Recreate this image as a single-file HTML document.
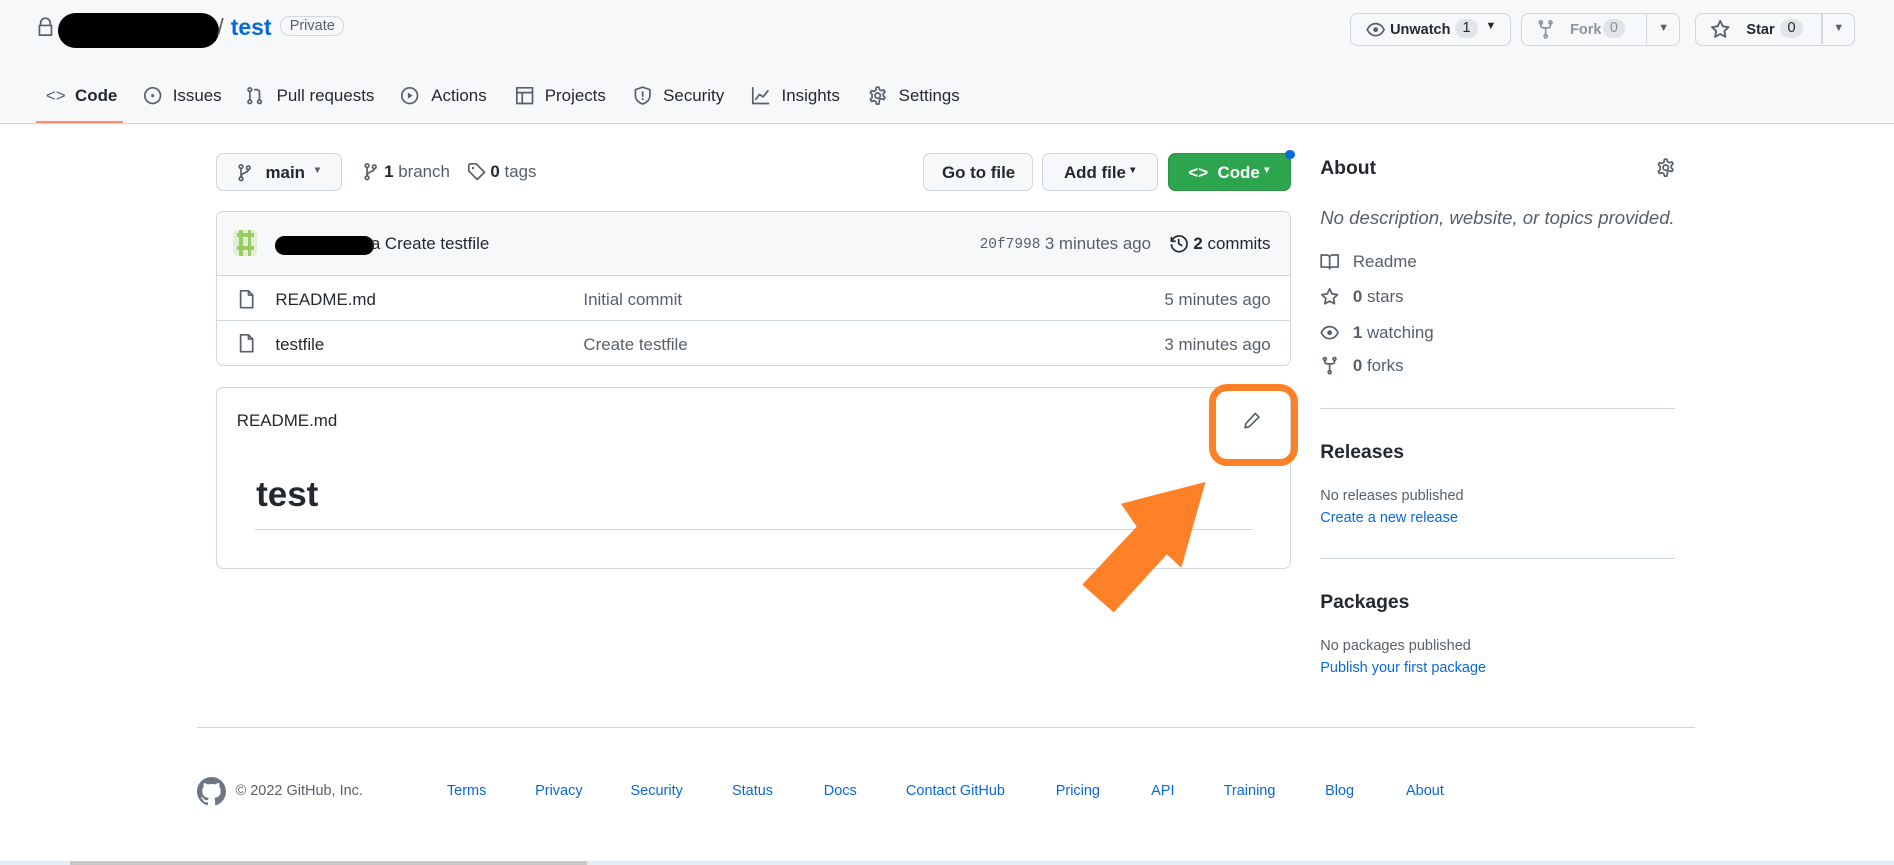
<!DOCTYPE html>
<html><head><meta charset="utf-8"><style>
html,body{margin:0;padding:0;width:1894px;height:865px;overflow:hidden;background:#fff}
#w{zoom:1.20791;width:1568px;height:716px;position:relative;font-family:"Liberation Sans",sans-serif;color:#24292f;font-size:14px}
.a{position:absolute;white-space:nowrap}
.hdr{position:absolute;left:0;top:0;width:1568px;height:102px;background:#f6f8fa;border-bottom:1px solid #d0d7de}
.btn{position:absolute;border:1px solid #d0d7de;border-radius:6px;background:#f6f8fa;box-sizing:border-box;font-size:12px;font-weight:bold}
.cnt{display:inline-block;background:#e1e4e8;border-radius:10px;padding:1px 6px;font-weight:normal;font-size:12px}
.nav{position:absolute;top:71px;font-size:14px}
svg{vertical-align:middle}
.ic{fill:none;stroke:#57606a;stroke-width:1.4;stroke-linecap:round;stroke-linejoin:round}
.blue{color:#0969da}
.gray{color:#57606a}
.box{position:absolute;border:1px solid #d0d7de;border-radius:6px;box-sizing:border-box}
.line{position:absolute;height:1px;background:#d0d7de}
.fl{position:absolute;top:648px;font-size:12px;color:#0969da}
</style></head><body><div id="w">
<div class="hdr"></div>
<svg class="a" style="left:31px;top:14px" width="14" height="16" viewBox="0 0 14 16"><path class="ic" d="M3 7V5a4 4 0 0 1 8 0v2M2 7h10v8H2z"/></svg>
<div class="a" style="left:48px;top:11px;width:133px;height:29px;background:#000;border-radius:15px"></div>
<div class="a" style="left:180px;top:12px;font-size:19px;color:#57606a">/</div>
<div class="a blue" style="left:191px;top:12px;font-size:19px;font-weight:bold">test</div>
<div class="a" style="left:232px;top:13px;border:1px solid #d0d7de;border-radius:12px;padding:1px 7px;font-size:12px;color:#57606a">Private</div>

<div class="btn" style="left:1118px;top:11px;width:133px;height:27px"><svg class="a" style="left:12px;top:5px" width="16" height="16" viewBox="0 0 16 16"><path class="ic" d="M1 8c2-4 4.5-5 7-5s5 1 7 5c-2 4-4.5 5-7 5S3 12 1 8z"/><circle cx="8" cy="8" r="2" fill="#57606a"/></svg><span class="a" style="left:32px;top:6px">Unwatch</span><span class="cnt a" style="left:86px;top:4px">1</span><span class="a" style="left:111px;top:5px;font-size:9px">▼</span></div>
<div class="btn" style="left:1259px;top:11px;width:132px;height:27px;color:#8c959f"><svg class="a" style="left:12px;top:5px" width="16" height="16" viewBox="0 0 16 16"><path class="ic" style="stroke:#8c959f" d="M4 2.5v2c0 1.5 1 2 2 2h4c1 0 2-.5 2-2v-2M8 6.5v6"/><circle class="ic" style="stroke:#8c959f" cx="4" cy="2" r="1.3"/><circle class="ic" style="stroke:#8c959f" cx="12" cy="2" r="1.3"/><circle class="ic" style="stroke:#8c959f" cx="8" cy="13.5" r="1.3"/></svg><span class="a" style="left:40px;top:6px">Fork</span><span class="cnt a" style="left:67px;top:4px;color:#8c959f">0</span><div class="a" style="left:103px;top:0;width:1px;height:25px;background:#d0d7de"></div><span class="a" style="left:113px;top:6px;font-size:9px;color:#57606a">▼</span></div>
<div class="btn" style="left:1403px;top:11px;width:133px;height:27px"><svg class="a" style="left:12px;top:4px" width="17" height="17" viewBox="0 0 16 16"><path class="ic" d="M8 1.5l2 4.2 4.5.6-3.3 3.1.8 4.5L8 11.7l-4 2.2.8-4.5L1.5 6.3 6 5.7z"/></svg><span class="a" style="left:42px;top:6px">Star</span><span class="cnt a" style="left:70px;top:4px">0</span><div class="a" style="left:104px;top:0;width:1px;height:25px;background:#d0d7de"></div><span class="a" style="left:114px;top:6px;font-size:9px;color:#57606a">▼</span></div>

<div class="nav" style="left:38px"><span style="color:#57606a">&lt;&gt;</span>&nbsp; <b>Code</b></div>
<div class="a" style="left:30px;top:100px;width:72px;height:2px;background:#fd8c73"></div>
<svg class="a" style="left:118px;top:71px" width="16" height="16" viewBox="0 0 16 16"><circle class="ic" cx="8" cy="8" r="6.5"/><circle cx="8" cy="8" r="1.3" fill="#57606a"/></svg><div class="nav" style="left:143px">Issues</div>
<svg class="a" style="left:203px;top:71px" width="16" height="16" viewBox="0 0 16 16"><circle class="ic" cx="4" cy="3" r="1.5"/><circle class="ic" cx="4" cy="13" r="1.5"/><circle class="ic" cx="12" cy="13" r="1.5"/><path class="ic" d="M4 4.5v7M12 11.5V5c0-1-1-2-2-2H8"/></svg><div class="nav" style="left:229px">Pull requests</div>
<svg class="a" style="left:331px;top:71px" width="16" height="16" viewBox="0 0 16 16"><circle class="ic" cx="8" cy="8" r="6.5"/><path d="M6.5 5.5v5l4-2.5z" fill="#57606a"/></svg><div class="nav" style="left:357px">Actions</div>
<svg class="a" style="left:426px;top:71px" width="16" height="16" viewBox="0 0 16 16"><path class="ic" d="M1.5 1.5h13v13h-13zM1.5 5.5h13M6 5.5v9"/></svg><div class="nav" style="left:451px">Projects</div>
<svg class="a" style="left:524px;top:71px" width="16" height="16" viewBox="0 0 16 16"><path class="ic" d="M8 1l6 2v5c0 3.5-3 6-6 7-3-1-6-3.5-6-7V3z"/><path class="ic" d="M8 5v3.5"/><circle cx="8" cy="10.8" r=".9" fill="#57606a"/></svg><div class="nav" style="left:549px">Security</div>
<svg class="a" style="left:622px;top:71px" width="16" height="16" viewBox="0 0 16 16"><path class="ic" d="M1.5 1.5v13h13M4 11l3-4 3 2 4-5"/></svg><div class="nav" style="left:647px">Insights</div>
<svg class="a" style="left:719px;top:71px" width="16" height="16" viewBox="0 0 16 16"><circle class="ic" cx="8" cy="8" r="2.2"/><path class="ic" d="M7 1h2l.5 2 1.6.9 2-.7 1 1.7-1.5 1.4v1.8l1.5 1.4-1 1.7-2-.7-1.6.9L9 15H7l-.5-2-1.6-.9-2 .7-1-1.7 1.5-1.4V6.9L1.9 5.5l1-1.7 2 .7L6.5 3.6z"/></svg><div class="nav" style="left:744px">Settings</div>

<!-- toolbar -->
<div class="btn" style="left:179px;top:127px;width:104px;height:31px;font-size:14px"><svg class="a" style="left:15px;top:7px" width="16" height="16" viewBox="0 0 16 16"><circle class="ic" cx="5" cy="3" r="1.5"/><circle class="ic" cx="5" cy="13" r="1.5"/><circle class="ic" cx="11" cy="4" r="1.5"/><path class="ic" d="M5 4.5v7M11 5.5c0 3-6 2-6 6"/></svg><span class="a" style="left:40px;top:7px">main</span><span class="a" style="left:79px;top:9px;font-size:8px;font-weight:normal;color:#57606a">▼</span></div>
<svg class="a" style="left:299px;top:134px" width="16" height="16" viewBox="0 0 16 16"><circle class="ic" cx="5" cy="3" r="1.5"/><circle class="ic" cx="5" cy="13" r="1.5"/><circle class="ic" cx="11" cy="4" r="1.5"/><path class="ic" d="M5 4.5v7M11 5.5c0 3-6 2-6 6"/></svg><div class="a" style="left:318px;top:134px"><b>1</b> <span class="gray">branch</span></div>
<svg class="a" style="left:387px;top:134px" width="16" height="16" viewBox="0 0 16 16"><path class="ic" d="M1.5 2.5v5l7 7 6-6-7-7h-5z"/><circle cx="5" cy="5" r="1" fill="#57606a"/></svg><div class="a" style="left:406px;top:134px"><b>0</b> <span class="gray">tags</span></div>
<div class="btn" style="left:764px;top:127px;width:91px;height:31px;font-size:14px;font-weight:normal"><span class="a" style="left:15px;top:7px;font-weight:bold">Go to file</span></div>
<div class="btn" style="left:863px;top:127px;width:96px;height:31px;font-size:14px"><span class="a" style="left:17px;top:7px">Add file</span><span class="a" style="left:70px;top:9px;font-size:8px">▼</span></div>
<div class="btn" style="left:967px;top:127px;width:102px;height:31px;font-size:14px;background:#2da44e;border-color:#2a9147;color:#fff"><span class="a" style="left:16px;top:7px">&lt;&gt;&nbsp; Code</span><span class="a" style="left:77px;top:9px;font-size:8px">▼</span></div>
<div class="a" style="left:1064px;top:124px;width:8px;height:8px;border-radius:50%;background:#0969da"></div>

<!-- file table -->
<div class="box" style="left:179px;top:175px;width:890px;height:128px"></div>
<div class="a" style="left:180px;top:176px;width:888px;height:52px;background:#f6f8fa;border-radius:6px 6px 0 0;border-bottom:1px solid #d0d7de"></div>
<div class="a" style="left:193px;top:190px;width:20px;height:22px;background:#e2efd2;border-radius:4px"></div>
<div class="a" style="left:196px;top:193px;width:14px;height:3px;background:#9acb64"></div><div class="a" style="left:196px;top:204px;width:14px;height:3px;background:#9acb64"></div><div class="a" style="left:198px;top:190px;width:3px;height:22px;background:#9acb64"></div><div class="a" style="left:205px;top:190px;width:3px;height:22px;background:#9acb64"></div>
<div class="a" style="left:228px;top:195px;width:82px;height:16px;background:#000;border-radius:8px"></div>
<div class="a" style="left:307px;top:194px">a Create testfile</div>
<div class="a gray" style="left:811px;top:196px;font-family:'Liberation Mono',monospace;font-size:12px">20f7998</div>
<div class="a gray" style="left:865px;top:194px">3 minutes ago</div>
<svg class="a" style="left:968px;top:194px" width="16" height="16" viewBox="0 0 16 16"><path class="ic" style="stroke:#24292f" d="M2 3v3h3M2.3 6A6.5 6.5 0 1 1 2 9M8 4.5V8l2.5 1.5"/></svg>
<div class="a" style="left:988px;top:194px"><b>2</b> commits</div>
<div class="line" style="left:180px;top:265px;width:888px"></div>
<svg class="a" style="left:196px;top:239px" width="16" height="17" viewBox="0 0 16 17"><path class="ic" d="M3 1.5h6.5l3.5 3.5v10.5H3zM9.5 1.5V5H13"/></svg>
<div class="a" style="left:228px;top:240px">README.md</div><div class="a gray" style="left:483px;top:240px">Initial commit</div><div class="a gray" style="left:964px;top:240px">5 minutes ago</div>
<svg class="a" style="left:196px;top:276px" width="16" height="17" viewBox="0 0 16 17"><path class="ic" d="M3 1.5h6.5l3.5 3.5v10.5H3zM9.5 1.5V5H13"/></svg>
<div class="a" style="left:228px;top:277px">testfile</div><div class="a gray" style="left:483px;top:277px">Create testfile</div><div class="a gray" style="left:964px;top:277px">3 minutes ago</div>

<!-- readme -->
<div class="box" style="left:179px;top:320px;width:890px;height:151px"></div>
<div class="a" style="left:196px;top:340px">README.md</div>
<div class="a" style="left:212px;top:393px;font-size:29px;font-weight:bold;color:#24292f">test</div>
<div class="line" style="left:211px;top:438px;width:826px"></div>
<div class="a" style="left:1001px;top:318px;width:62px;height:56px;border:6px solid #fe8027;border-radius:15px"></div>
<svg class="a" style="left:1028px;top:340px" width="16" height="16" viewBox="0 0 16 16"><path class="ic" d="M11 2l3 3-8 8-3.5.8.8-3.5z"/></svg>
<svg class="a" style="left:0;top:0" width="1568" height="716"><polygon fill="#fe8027" points="998,399 978,470 966,459 922,507 896,484 941,436 928,417"/></svg>

<!-- sidebar -->
<div class="a" style="left:1093px;top:131px;font-size:16px;font-weight:bold">About</div>
<svg class="a" style="left:1371px;top:131px" width="16" height="16" viewBox="0 0 16 16"><circle class="ic" cx="8" cy="8" r="2.2"/><path class="ic" d="M7 1h2l.5 2 1.6.9 2-.7 1 1.7-1.5 1.4v1.8l1.5 1.4-1 1.7-2-.7-1.6.9L9 15H7l-.5-2-1.6-.9-2 .7-1-1.7 1.5-1.4V6.9L1.9 5.5l1-1.7 2 .7L6.5 3.6z"/></svg>
<div class="a gray" style="left:1093px;top:171px;font-size:15.4px;font-style:italic">No description, website, or topics provided.</div>
<svg class="a" style="left:1093px;top:209px" width="16" height="16" viewBox="0 0 16 16"><path class="ic" d="M1 2.5h4.5c1.5 0 2.5 1 2.5 2.5v9c0-1-1-1.5-2-1.5H1zM15 2.5h-4.5C9 2.5 8 3.5 8 5v9c0-1 1-1.5 2-1.5h5z"/></svg><div class="a gray" style="left:1120px;top:209px">Readme</div>
<svg class="a" style="left:1093px;top:238px" width="16" height="16" viewBox="0 0 16 16"><path class="ic" d="M8 1.5l2 4.2 4.5.6-3.3 3.1.8 4.5L8 11.7l-4 2.2.8-4.5L1.5 6.3 6 5.7z"/></svg><div class="a gray" style="left:1120px;top:238px"><b style="color:#57606a">0</b> stars</div>
<svg class="a" style="left:1093px;top:267px" width="16" height="16" viewBox="0 0 16 16"><path class="ic" d="M1 8c2-4 4.5-5 7-5s5 1 7 5c-2 4-4.5 5-7 5S3 12 1 8z"/><circle cx="8" cy="8" r="2" fill="#57606a"/></svg><div class="a gray" style="left:1120px;top:267px"><b>1</b> watching</div>
<svg class="a" style="left:1093px;top:295px" width="16" height="16" viewBox="0 0 16 16"><path class="ic" d="M4 3.5v1c0 1.5 1 2 2 2h4c1 0 2-.5 2-2v-1M8 6.5v6"/><circle class="ic" cx="4" cy="2.5" r="1.2"/><circle class="ic" cx="12" cy="2.5" r="1.2"/><circle class="ic" cx="8" cy="13.5" r="1.2"/></svg><div class="a gray" style="left:1120px;top:295px"><b>0</b> forks</div>
<div class="line" style="left:1093px;top:338px;width:294px"></div>
<div class="a" style="left:1093px;top:366px;font-size:16px;font-weight:bold">Releases</div>
<div class="a gray" style="left:1093px;top:404px;font-size:12px">No releases published</div>
<div class="a blue" style="left:1093px;top:422px;font-size:12px">Create a new release</div>
<div class="line" style="left:1093px;top:462px;width:294px"></div>
<div class="a" style="left:1093px;top:490px;font-size:16px;font-weight:bold">Packages</div>
<div class="a gray" style="left:1093px;top:528px;font-size:12px">No packages published</div>
<div class="a blue" style="left:1093px;top:546px;font-size:12px">Publish your first package</div>

<!-- footer -->
<div class="line" style="left:163px;top:602px;width:1240px"></div>
<svg class="a" style="left:163px;top:643px" width="24" height="24" viewBox="0 0 16 16"><path fill="#6e7781" d="M8 0C3.58 0 0 3.58 0 8c0 3.54 2.29 6.530 5.47 7.59.4.07.55-.17.55-.38v-1.33c-2.23.48-2.7-1.070-2.7-1.070-.36-.92-.89-1.17-.89-1.17-.73-.5.06-.49.06-.49.8.06 1.23.82 1.23.82.72 1.23 1.88.87 2.33.67.07-.52.28-.87.51-1.070-1.78-.2-3.64-.89-3.64-3.95 0-.87.31-1.59.82-2.15-.08-.2-.36-1.020.08-2.12 0 0 .67-.21 2.2.82A7.6 7.6 0 0 1 8 3.87c.68 0 1.36.09 2 .27 1.53-1.040 2.2-.82 2.2-.82.44 1.1.16 1.92.08 2.12.51.56.82 1.27.82 2.15 0 3.070-1.87 3.75-3.65 3.95.29.25.54.73.54 1.48v2.2c0 .21.15.46.55.38A8 8 0 0 0 16 8c0-4.42-3.58-8-8-8z"/></svg>
<div class="fl" style="left:195px;color:#57606a">© 2022 GitHub, Inc.</div>
<div class="fl" style="left:370px">Terms</div><div class="fl" style="left:443px">Privacy</div><div class="fl" style="left:522px">Security</div><div class="fl" style="left:606px">Status</div><div class="fl" style="left:682px">Docs</div><div class="fl" style="left:750px">Contact GitHub</div><div class="fl" style="left:874px">Pricing</div><div class="fl" style="left:953px">API</div><div class="fl" style="left:1013px">Training</div><div class="fl" style="left:1097px">Blog</div><div class="fl" style="left:1164px">About</div>
<div class="a" style="left:0;top:713px;width:1568px;height:3px;background:#e6eef4"></div>
<div class="a" style="left:58px;top:713px;width:428px;height:3px;background:#c8c8c8"></div>
</div></body></html>
